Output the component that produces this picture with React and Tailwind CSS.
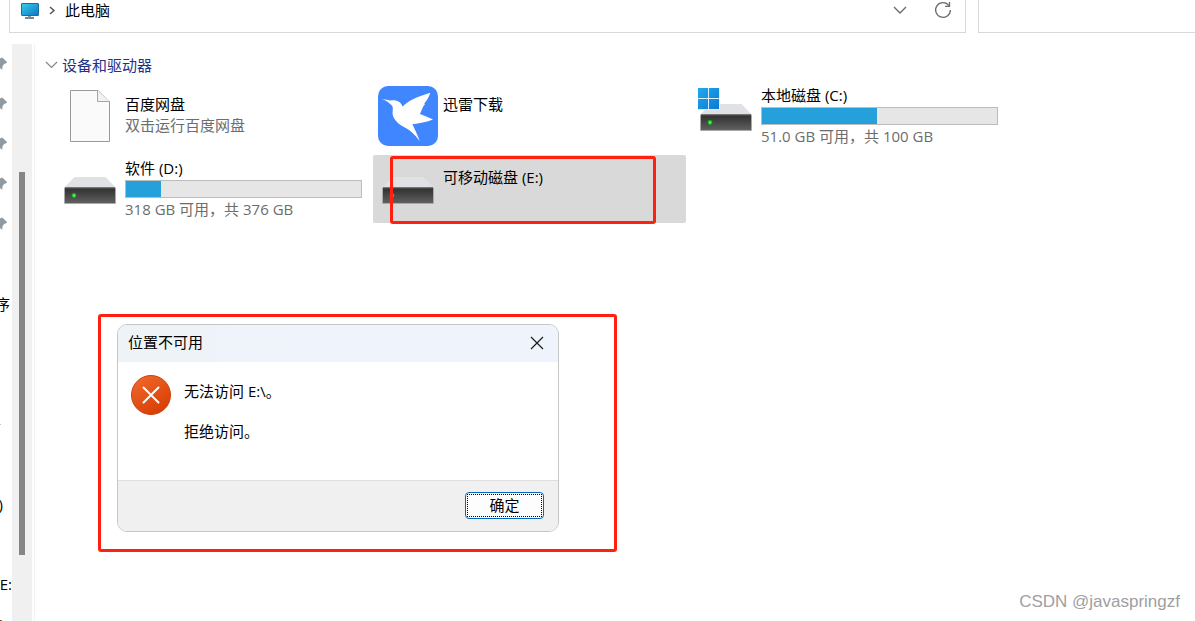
import React from "react";

function MonitorIcon() {
  return (
    <svg width="20" height="18" viewBox="0 0 20 18" aria-hidden="true">
      <defs>
        <linearGradient id="screen" x1="0" y1="0" x2="1" y2="1">
          <stop offset="0" stopColor="#33d0ea" />
          <stop offset="1" stopColor="#1273c4" />
        </linearGradient>
      </defs>
      <rect x="8" y="13" width="3" height="3" fill="#8d9aa5" />
      <rect x="5" y="15" width="9" height="2" fill="#7b8893" />
      <rect x="1.5" y="1.5" width="17" height="12" rx="0.5" fill="url(#screen)" stroke="#1d6d9c" />
    </svg>
  );
}

function PinIcon() {
  return (
    <svg width="7" height="13" viewBox="0 0 7 13" aria-hidden="true">
      <path d="M0 1.5 L2.2 0.5 L7 5 L6.4 6.2 L4.4 6.8 L2.6 9 L2.2 12.2 L1.4 12.4 L0 11 Z" fill="#8f9aa3" />
    </svg>
  );
}

function FileIcon() {
  return (
    <svg className="shrink-0" width="60" height="60" viewBox="0 0 60 60" aria-hidden="true">
      <path d="M10.5 4.5 H38 L49.5 16 V55.5 H10.5 Z" fill="#fafafa" stroke="#9a9a9a" />
      <path d="M37.5 4.5 V15.5 H49.5" fill="#f1f1f1" stroke="#a5a5a5" />
    </svg>
  );
}

function BirdIcon() {
  return (
    <svg className="shrink-0" width="60" height="60" viewBox="0 0 60 60" aria-hidden="true">
      <rect width="60" height="60" rx="10" fill="#4087ff" />
      <path
        d="M4 13 C8 13.6 10.5 14 12.5 14.6 C14.5 13.9 18 14 20.5 15.6 C22.8 17 24 18.8 24.6 20.8 C29 15 40 10.5 52.3 6.8 C51 11 49 14.5 46.4 17.2 L46.8 18.4 C44.6 20.6 43.6 24 42 28 C46 29.6 50.5 31.5 55 33.6 C49 36.3 41 37.6 34.4 38.2 C36.5 43 39.5 48.5 41.8 55.3 C37 48.5 31.5 43.6 25.5 40.8 C18.5 37 14.6 32 14.6 27.3 C14.6 24 15.6 21.6 13.6 19.2 C11.5 16.8 8 14.6 4 13 Z"
        fill="#fff"
      />
    </svg>
  );
}

function DriveIcon({ system }) {
  return (
    <svg className="shrink-0" width="60" height="60" viewBox="0 0 60 60" aria-hidden="true">
      <defs>
        <linearGradient id="front" x1="0" y1="0" x2="0" y2="1">
          <stop offset="0" stopColor="#2f2f2f" />
          <stop offset="1" stopColor="#626262" />
        </linearGradient>
        <linearGradient id="win" x1="0" y1="0" x2="1" y2="1">
          <stop offset="0" stopColor="#22a9ec" />
          <stop offset="1" stopColor="#0a79d2" />
        </linearGradient>
      </defs>
      <path d="M14.5 18 H45.5 L56 29 H4 Z" fill="#e0e1e4" />
      <rect x="4.5" y="29" width="51" height="15.5" rx="0.5" fill="url(#front)" stroke="#a9a9a9" />
      <path d="M5 29 H55" stroke="#222" />
      <circle cx="14" cy="36.5" r="2.4" fill="#14b51c" />
      <circle cx="14" cy="36.5" r="1.2" fill="#5dfc5d" />
      {system && (
        <g>
          <rect x="2" y="2" width="22" height="22" fill="#d9eefa" />
          <path d="M2 2 H12 V12 H2 Z M13 2 H23 V12 H13 Z M2 13 H12 V23 H2 Z M13 13 H23 V23 H13 Z" fill="url(#win)" />
        </g>
      )}
    </svg>
  );
}

function Tile({ icon, title, note, used, selected, children }) {
  const hasBar = used !== undefined;
  return (
    <li
      className={
        "relative flex h-[68px] gap-[5px] rounded-xs pt-1 pr-[6px] pl-[5px] " +
        (selected ? "bg-[#d9d9d9]" : "")
      }
    >
      {icon}
      <div className={"flex min-w-0 flex-1 flex-col whitespace-nowrap " + (hasBar ? "" : "pt-[9px]")}>
        <span className="leading-[18px] text-black">{title}</span>
        {hasBar && (
          <div className="mt-[3px] mb-px h-[18px] border border-[#bcbcbc] bg-[#e6e6e6]">
            <div className="h-full bg-[#26a0da]" style={{ width: used + "%" }} />
          </div>
        )}
        {note && <span className={"text-[#6d6d6d] " + (hasBar ? "leading-5" : "leading-6")}>{note}</span>}
      </div>
      {children}
    </li>
  );
}

function Sidebar() {
  return (
    <nav className="flex w-3 shrink-0 flex-col overflow-hidden whitespace-nowrap text-black">
      {[0, 1, 2, 3, 4].map((n) => (
        <span key={n} className="flex h-10 shrink-0 items-center pb-[2px]">
          <PinIcon />
        </span>
      ))}
      <span className="h-10 shrink-0" />
      <span className="flex h-10 shrink-0 items-center justify-end pr-[2px]">序</span>
      <span className="h-20 shrink-0" />
      <span className="flex h-10 shrink-0 items-center">
        <span className="h-px w-px bg-[#c4c4c4]" />
      </span>
      <span className="h-10 shrink-0" />
      <span className="flex h-10 shrink-0 items-center justify-end pr-[9px]">)</span>
      <span className="h-10 shrink-0" />
      <span className="flex h-10 shrink-0 items-center justify-end">E:</span>
      <span className="flex h-10 shrink-0 items-center justify-end pr-2">)</span>
    </nav>
  );
}

function ErrorDialog() {
  return (
    <div
      role="alertdialog"
      aria-labelledby="dialog-title"
      className="flex flex-col overflow-hidden rounded-[10px] border border-[#c6c6c6] bg-white text-black"
    >
      <header className="flex h-[37px] items-center justify-between bg-linear-to-r from-[#eef3f7] to-[#eff3fb] to-40% pr-[14px] pb-[2px] pl-[10px]">
        <h2 id="dialog-title">位置不可用</h2>
        <button type="button" aria-label="关闭">
          <svg width="14" height="14" viewBox="0 0 14 14" aria-hidden="true">
            <path d="M1 1 L13 13 M13 1 L1 13" stroke="#1a1a1a" strokeWidth="1.2" />
          </svg>
        </button>
      </header>
      <div className="flex h-[118px] gap-[13px] pt-[13px] pl-[13px]">
        <svg width="40" height="40" viewBox="0 0 40 40" aria-hidden="true">
          <defs>
            <linearGradient id="error" x1="0.2" y1="0" x2="0.8" y2="1">
              <stop offset="0" stopColor="#f0682b" />
              <stop offset="1" stopColor="#d63b03" />
            </linearGradient>
          </defs>
          <circle cx="20" cy="20" r="19.5" fill="url(#error)" stroke="#c8450f" />
          <path d="M12.5 12.5 L27.5 27.5 M27.5 12.5 L12.5 27.5" stroke="#fff" strokeWidth="2" strokeLinecap="round" />
        </svg>
        <div className="flex flex-col gap-5 pt-[6px] leading-5">
          <p>无法访问 E:\。</p>
          <p>拒绝访问。</p>
        </div>
      </div>
      <footer className="flex h-[51px] items-center justify-end border-t border-[#dfdfdf] bg-[#f0f0f0] pr-[14px] pb-[2px]">
        <button type="button" className="h-[27px] w-[79px] rounded-[4px] border border-[#0067c0] bg-[#fdfdfd] p-px">
          <span className="flex h-full items-center justify-center border border-dotted border-black">确定</span>
        </button>
      </footer>
    </div>
  );
}

export default function App() {
  return (
    <div className="relative flex h-screen flex-col overflow-hidden bg-white font-['Open_Sans','Noto_Sans_CJK_SC',sans-serif] text-[15px]">
      <header className="flex h-[33px] shrink-0 gap-3 pl-[9px]">
        <div className="flex flex-1 items-start border-x border-b border-[#d9d9d9] pr-[13px] pl-[10px]">
          <a href="#pc" className="flex items-center text-black">
            <MonitorIcon />
            <svg className="mr-[9px] ml-2" width="8" height="9" viewBox="0 0 8 9" aria-hidden="true">
              <path d="M2 1 L6 4.5 L2 8" fill="none" stroke="#555" strokeWidth="1.5" />
            </svg>
            <span className="leading-[21px]">此电脑</span>
          </a>
          <div className="ml-auto flex h-5 items-center gap-[27px]">
            <button type="button" aria-label="展开地址">
              <svg width="14" height="8" viewBox="0 0 14 8" aria-hidden="true">
                <path d="M1 1 L7 7 L13 1" fill="none" stroke="#6b6b6b" strokeWidth="1.4" />
              </svg>
            </button>
            <button type="button" aria-label="刷新">
              <svg width="18" height="18" viewBox="0 0 18 18" aria-hidden="true">
                <path d="M15 4.6 A7.4 7.4 0 1 0 16.4 9" fill="none" stroke="#6b6b6b" strokeWidth="1.3" />
                <path d="M15.5 1 V5.4 H11" fill="none" stroke="#6b6b6b" strokeWidth="1.3" />
              </svg>
            </button>
          </div>
        </div>
        <input type="search" aria-label="搜索" className="w-[217px] border-b border-l border-[#d9d9d9] outline-none" />
      </header>

      <div className="mt-[11px] flex min-h-0 flex-1">
        <Sidebar />
        <div className="flex w-5 shrink-0 justify-center bg-[#f0f0f0] pt-32">
          <div className="h-[383px] w-[6px] bg-[#858585]" />
        </div>
        <main className="ml-[2px] flex-1 border-l border-[#f3f3f3] pl-5">
          <h1 className="-ml-[10px] flex items-center gap-1 pt-[11px] leading-5 text-[#1e3287]">
            <svg width="13" height="8" viewBox="0 0 13 8" aria-hidden="true">
              <path d="M1 1 L6.5 6.5 L12 1" fill="none" stroke="#868686" strokeWidth="1.2" />
            </svg>
            设备和驱动器
          </h1>
          <ul className="mt-[7px] grid grid-cols-[repeat(auto-fill,313px)] gap-[5px]">
            <Tile icon={<FileIcon />} title="百度网盘" note="双击运行百度网盘" />
            <Tile icon={<BirdIcon />} title="迅雷下载" />
            <Tile icon={<DriveIcon system />} title="本地磁盘 (C:)" note="51.0 GB 可用，共 100 GB" used={49} />
            <Tile icon={<DriveIcon />} title="软件 (D:)" note="318 GB 可用，共 376 GB" used={15} />
            <Tile icon={<DriveIcon />} title="可移动磁盘 (E:)" selected>
              <div className="absolute top-px left-[17px] h-[68px] w-[266px] rounded-[3px] border-3 border-[#ff2010]" />
            </Tile>
          </ul>
        </main>
      </div>

      <div className="absolute top-[314px] left-[98px] w-[519px] rounded-[3px] border-3 border-[#ff2010] pt-[7px] pr-[55px] pb-[17px] pl-4">
        <ErrorDialog />
      </div>

      <div className="absolute right-[15px] bottom-[9px] font-['Liberation_Sans',sans-serif] text-[17px] leading-5 text-[#a0a0a0]">
        CSDN @javaspringzf
      </div>
    </div>
  );
}
